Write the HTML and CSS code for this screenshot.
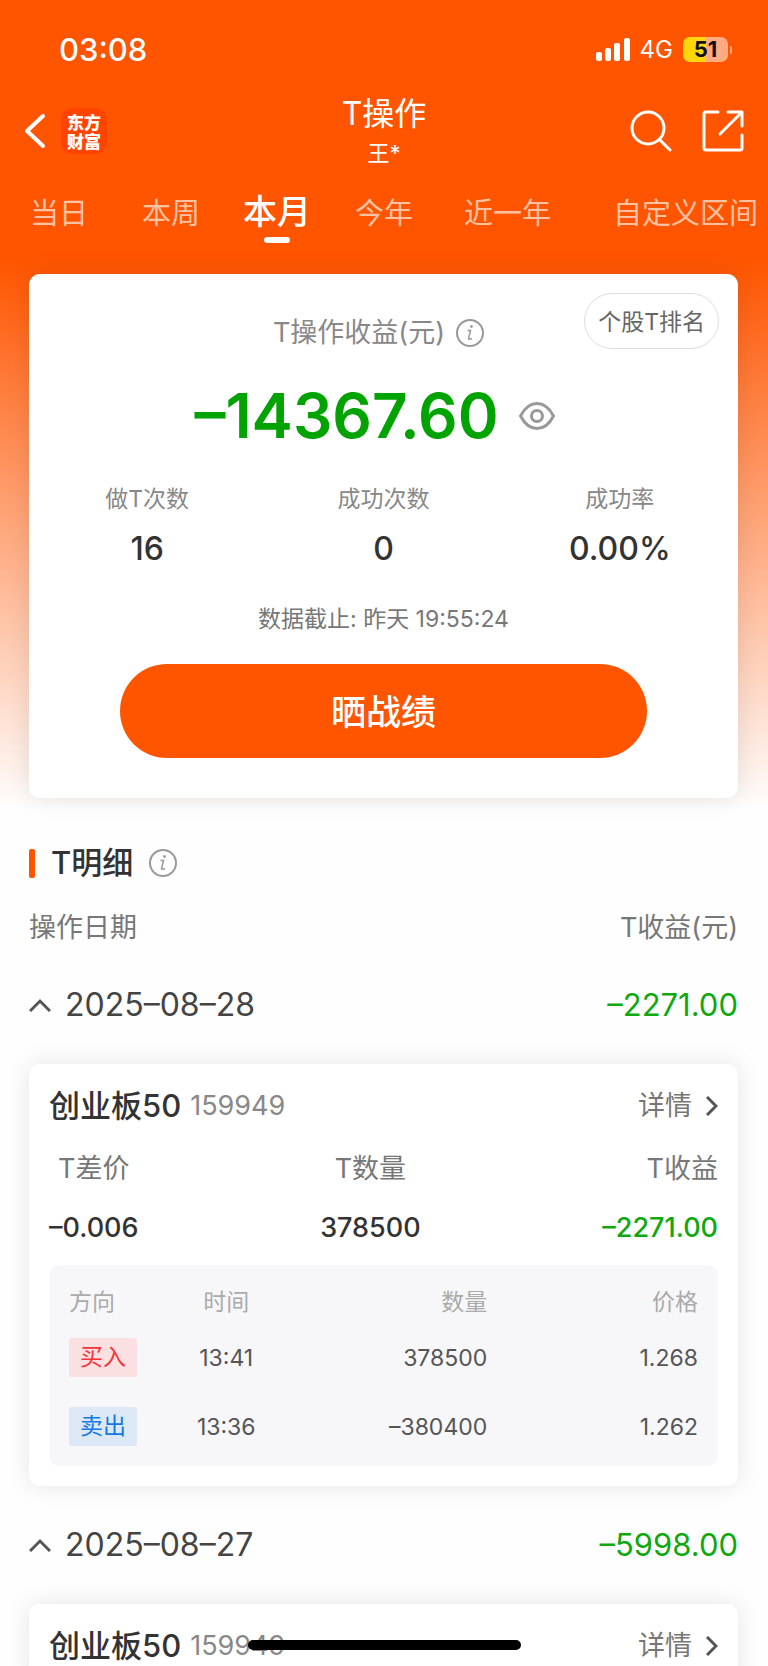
FILE: index.html
```html
<!DOCTYPE html>
<html lang="zh-CN">
<head>
    <meta charset="UTF-8">
    <meta name="viewport" content="width=device-width, initial-scale=1.0">
    <title>T操作</title>
    <link rel="stylesheet" href="styles.css">
</head>
<body>
<div class="screen">
    <div class="status-bar">
        <span class="clock">03:08</span>
        <div class="status-icons">
            <svg class="signal" width="34" height="23" viewBox="0 0 34 23" fill="#fff">
                <rect x="0" y="14" width="6" height="9" rx="2"/>
                <rect x="9" y="10" width="6" height="13" rx="2"/>
                <rect x="18" y="5" width="6" height="18" rx="2"/>
                <rect x="28" y="0" width="6" height="23" rx="2"/>
            </svg>
            <span class="network">4G</span>
            <span class="battery">51</span>
        </div>
    </div>

    <header class="nav">
        <div class="nav-side">
            <a href="#" class="back" aria-label="返回">
                <svg width="22" height="36" viewBox="0 0 22 36" fill="none" stroke="#fff" stroke-width="4" stroke-linecap="round" stroke-linejoin="round"><path d="M19 3L3 18L19 33"/></svg>
            </a>
            <a href="#" class="logo">东方<br>财富</a>
        </div>
        <div class="nav-title">
            <h1>T操作</h1>
            <p>王*</p>
        </div>
        <div class="nav-side nav-right">
            <button type="button" aria-label="搜索">
                <svg width="42" height="42" viewBox="0 0 42 42" fill="none" stroke="#fff" stroke-width="3" stroke-linecap="round"><circle cx="18" cy="18" r="16"/><path d="M29.500 29.500L40 40"/></svg>
            </button>
            <button type="button" aria-label="分享">
                <svg width="42" height="42" viewBox="0 0 42 42" fill="none" stroke="#fff" stroke-width="3" stroke-linecap="round" stroke-linejoin="round"><path d="M16 2H4Q2 2 2 4V38Q2 40 4 40H38Q40 40 40 38V25"/><path d="M26 2H40V16"/><path d="M39 3L18 24"/></svg>
            </button>
        </div>
    </header>

    <nav class="tabs">
        <a href="#">当日</a>
        <a href="#">本周</a>
        <a href="#" class="active">本月</a>
        <a href="#">今年</a>
        <a href="#">近一年</a>
        <a href="#">自定义区间</a>
    </nav>

    <main>
        <section class="card summary">
            <button type="button" class="rank-btn">个股T排名</button>
            <div class="summary-title">
                <span>T操作收益(元)</span>
                <svg class="info" viewBox="0 0 28 28" fill="none" stroke="#999" stroke-width="2"><circle cx="14" cy="14" r="13"/><path d="M11.500 11.500H14.500L12.500 19.500Q12.500 21 16 19.500" stroke-width="1.500"/><circle cx="15.500" cy="7.500" r="1" fill="#999" stroke-width="1"/></svg>
            </div>
            <div class="amount">
                <strong>–14367.60</strong>
                <button type="button" aria-label="隐藏金额">
                    <svg width="36" height="28" viewBox="0 0 36 28" fill="none" stroke="#999" stroke-width="3"><path d="M1.500 14Q8 1.500 18 1.500T34.500 14Q28 26.500 18 26.500T1.500 14Z" stroke-linejoin="round"/><circle cx="18" cy="14" r="5.500"/></svg>
                </button>
            </div>
            <dl class="stats">
                <div><dt>做T次数</dt><dd>16</dd></div>
                <div><dt>成功次数</dt><dd>0</dd></div>
                <div><dt>成功率</dt><dd>0.00%</dd></div>
            </dl>
            <p class="deadline">数据截止: 昨天 19:55:24</p>
            <button type="button" class="share-btn">晒战绩</button>
        </section>

        <section class="detail">
            <h2 class="detail-title">
                <span>T明细</span>
                <svg class="info" viewBox="0 0 28 28" fill="none" stroke="#999" stroke-width="2"><circle cx="14" cy="14" r="13"/><path d="M11.500 11.500H14.500L12.500 19.500Q12.500 21 16 19.500" stroke-width="1.500"/><circle cx="15.500" cy="7.500" r="1" fill="#999" stroke-width="1"/></svg>
            </h2>
            <div class="columns">
                <span>操作日期</span>
                <span>T收益(元)</span>
            </div>

            <div class="date-row">
                <svg width="22" height="14" viewBox="0 0 22 14" fill="none" stroke="#555" stroke-width="3"><path d="M1 13L11 3L21 13"/></svg>
                <span class="date">2025–08–28</span>
                <span class="green">–2271.00</span>
            </div>
            <article class="card trade">
                <div class="trade-head">
                    <h3>创业板50</h3>
                    <span class="code">159949</span>
                    <a href="#">详情<svg width="12" height="20" viewBox="0 0 12 20" fill="none" stroke="#555" stroke-width="3"><path d="M1 1L10 10L1 19"/></svg></a>
                </div>
                <dl class="figures">
                    <div><dt>T差价</dt><dd>–0.006</dd></div>
                    <div><dt>T数量</dt><dd>378500</dd></div>
                    <div class="right"><dt>T收益</dt><dd class="green">–2271.00</dd></div>
                </dl>
                <div class="orders">
                    <table>
                        <thead>
                            <tr><th>方向</th><th>时间</th><th>数量</th><th>价格</th></tr>
                        </thead>
                        <tbody>
                            <tr><td><span class="tag buy">买入</span></td><td>13:41</td><td>378500</td><td>1.268</td></tr>
                            <tr><td><span class="tag sell">卖出</span></td><td>13:36</td><td>–380400</td><td>1.262</td></tr>
                        </tbody>
                    </table>
                </div>
            </article>

            <div class="date-row">
                <svg width="22" height="14" viewBox="0 0 22 14" fill="none" stroke="#555" stroke-width="3"><path d="M1 13L11 3L21 13"/></svg>
                <span class="date">2025–08–27</span>
                <span class="green">–5998.00</span>
            </div>
            <article class="card trade">
                <div class="trade-head">
                    <h3>创业板50</h3>
                    <span class="code">159949</span>
                    <a href="#">详情<svg width="12" height="20" viewBox="0 0 12 20" fill="none" stroke="#555" stroke-width="3"><path d="M1 1L10 10L1 19"/></svg></a>
                </div>
            </article>
        </section>
    </main>
    <div class="home-indicator"></div>
</div>
</body>
</html>
```
FILE: styles.css
```css
* { box-sizing: border-box; }
body {
    font-family: Inter, "Noto Sans CJK SC", sans-serif;
    background: #fefefe;
    margin: 0;
    color: #333;
}
h1, h2, h3, p, dl, dd { margin: 0; }
a { color: inherit; text-decoration: none; }
button {
    font-family: inherit;
    background: none;
    border: 0;
    padding: 0;
    cursor: pointer;
}
svg { display: block; flex: none; }
.screen {
    height: 100vh;
    overflow: hidden;
    background: linear-gradient(#ff5500 260px, #fefefe 810px);
}

/* Status bar */
.status-bar {
    height: 95px;
    padding: 3px 40px 0 59px;
    display: flex;
    justify-content: space-between;
    align-items: center;
    color: #fff;
}
.clock { font-size: 31px; font-weight: 500; }
.status-icons { display: flex; align-items: center; }
.network { font-size: 24px; margin: 0 10px; }
.battery {
    position: relative;
    width: 45px;
    height: 25px;
    border-radius: 7px;
    background: linear-gradient(90deg, #ffd60a 52%, #ffaa80 52%);
    color: #111;
    font-size: 22px;
    font-weight: 700;
    line-height: 25px;
    text-align: center;
}
.battery::after {
    content: "";
    position: absolute;
    right: -4px;
    top: 9px;
    width: 2px;
    height: 8px;
    border-radius: 0 2px 2px 0;
    background: #ffaa80;
}

/* Nav */
.nav {
    display: grid;
    grid-template-columns: 1fr auto 1fr;
    align-items: center;
    padding: 0 24px;
    color: #fff;
}
.nav-side { display: flex; align-items: center; gap: 15px; }
.nav-right { justify-content: flex-end; gap: 30px; }
.logo {
    width: 46px;
    height: 46px;
    padding-top: 4px;
    border-radius: 12px;
    background: #ff4400;
    font-family: "Noto Sans CJK SC", sans-serif;
    font-size: 17px;
    font-weight: 900;
    line-height: 19px;
    text-align: center;
}
.nav-title { text-align: center; }
.nav-title h1 { font-size: 32px; font-weight: 400; line-height: 38px; }
.nav-title p { font-size: 22px; line-height: 26px; margin-top: 7px; }

/* Tabs */
.tabs {
    display: grid;
    grid-template-columns: 112fr 101fr 112fr 109fr 149fr auto;
    align-items: baseline;
    height: 108px;
    padding: 26px 10px 0 30px;
    color: #ffc2a3;
    font-size: 29px;
    line-height: 40px;
}
.tabs a { white-space: nowrap; }
.tabs .active {
    position: relative;
    justify-self: start;
    color: #fff;
    font-size: 34px;
    font-weight: 500;
}
.tabs .active::after {
    content: "";
    position: absolute;
    left: 50%;
    bottom: -11px;
    width: 26px;
    height: 6px;
    margin-left: -13px;
    border-radius: 3px;
    background: #fff;
}

main { padding: 0 30px 0 29px; }
.card {
    background: #fff;
    border-radius: 11px;
    box-shadow: 0 0 24px rgba(0,0,0,0.1);
}
.green { color: #0fa80f; }
.info { width: 28px; height: 28px; }

/* Summary */
.summary {
    position: relative;
    padding: 39px 0 40px;
    text-align: center;
}
.rank-btn {
    position: absolute;
    top: 19px;
    right: 19px;
    height: 56px;
    padding: 0 13px 3px;
    border: 1px solid #ddd;
    border-radius: 28px;
    color: #666;
    font-size: 23px;
}
.summary-title {
    display: flex;
    justify-content: center;
    align-items: center;
    gap: 11px;
    padding-right: 10px;
    color: #888;
    font-size: 27px;
    line-height: 40px;
}
.amount {
    display: flex;
    justify-content: center;
    align-items: center;
    gap: 20px;
    margin-top: 28px;
    padding-right: 18px;
}
.amount strong {
    color: #00a300;
    font-size: 62px;
    font-weight: 600;
    line-height: 70px;
}
.stats {
    display: grid;
    grid-template-columns: repeat(3, 1fr);
    margin-top: 31px;
}
.stats dt { color: #888; font-size: 23px; line-height: 34px; }
.stats dd { font-size: 32px; font-weight: 500; line-height: 40px; margin-top: 13px; }
.deadline { margin-top: 34px; color: #777; font-size: 23px; line-height: 32px; }
.share-btn {
    display: block;
    width: calc(100% - 182px);
    height: 94px;
    margin: 29px auto 0;
    padding-bottom: 4px;
    border-radius: 47px;
    background: #ff5500;
    color: #fff;
    font-size: 35px;
    font-weight: 500;
}

/* Detail list */
.detail-title {
    display: flex;
    align-items: center;
    margin-top: 45px;
    font-size: 31px;
    font-weight: 500;
    line-height: 40px;
}
.detail-title::before {
    content: "";
    width: 6px;
    height: 29px;
    margin-right: 16px;
    border-radius: 2px;
    background: #ff5500;
}
.detail-title .info { margin-left: 16px; }
.columns {
    display: flex;
    justify-content: space-between;
    margin-top: 27px;
    color: #777;
    font-size: 27px;
    line-height: 36px;
}
.date-row {
    display: flex;
    align-items: center;
    margin: 39px 0;
    color: #444;
    font-size: 31px;
    line-height: 40px;
}
.date { flex: 1; margin-left: 14px; font-size: 32px; }
.trade { padding: 22px 20px 20px; }
.trade-head { display: flex; align-items: center; line-height: 40px; }
.trade-head h3 { font-size: 31px; font-weight: 500; }
.code { margin-left: 9px; color: #888; font-size: 27px; }
.trade-head a {
    display: flex;
    align-items: center;
    gap: 14px;
    margin-left: auto;
    color: #777;
    font-size: 27px;
}
.figures {
    display: flex;
    justify-content: space-between;
    margin-top: 25px;
    font-size: 27px;
    line-height: 36px;
    text-align: center;
}
.figures dt { color: #777; }
.figures dd { margin-top: 23px; font-weight: 500; }
.figures .right { text-align: right; }
.orders {
    margin-top: 19px;
    padding: 18px 20px 5px;
    border-radius: 10px;
    background: #f7f7fa;
}
.orders table {
    width: 100%;
    table-layout: fixed;
    border-collapse: collapse;
    color: #555;
    font-size: 23px;
    text-align: right;
}
.orders th { width: 33.5%; height: 40px; padding: 0 0 6px; color: #aaa; font-weight: 400; }
.orders td { height: 69px; padding: 0; }
.orders th:nth-child(1) { width: 17%; }
.orders th:nth-child(2) { width: 16%; }
.orders tr > :nth-child(1) { text-align: left; }
.orders tr > :nth-child(2) { text-align: center; }
.tag {
    display: inline-block;
    padding: 0 11px;
    border-radius: 3px;
    line-height: 39px;
}
.buy { background: #fae0e1; color: #f5333c; }
.sell { background: #dce8f6; color: #1478e6; }

.home-indicator {
    position: fixed;
    left: 50%;
    bottom: 16px;
    width: 273px;
    height: 10px;
    margin-left: -136px;
    border-radius: 5px;
    background: #000;
}
```
